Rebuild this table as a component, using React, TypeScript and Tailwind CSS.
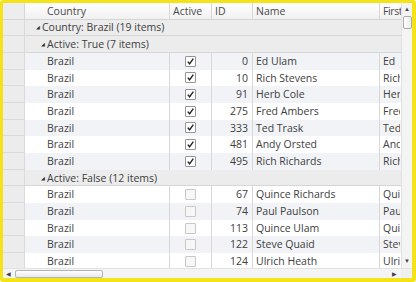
type Row =
  | { kind: "group"; level: number; label: string }
  | { kind: "data"; active: boolean; id: number; name: string };

const rows: Row[] = [
  { kind: "group", level: 0, label: "Country: Brazil (19 items)" },
  { kind: "group", level: 1, label: "Active: True (7 items)" },
  { kind: "data", active: true, id: 0, name: "Ed Ulam" },
  { kind: "data", active: true, id: 10, name: "Rich Stevens" },
  { kind: "data", active: true, id: 91, name: "Herb Cole" },
  { kind: "data", active: true, id: 275, name: "Fred Ambers" },
  { kind: "data", active: true, id: 333, name: "Ted Trask" },
  { kind: "data", active: true, id: 481, name: "Andy Orsted" },
  { kind: "data", active: true, id: 495, name: "Rich Richards" },
  { kind: "group", level: 1, label: "Active: False (12 items)" },
  { kind: "data", active: false, id: 67, name: "Quince Richards" },
  { kind: "data", active: false, id: 74, name: "Paul Paulson" },
  { kind: "data", active: false, id: 113, name: "Quince Ulam" },
  { kind: "data", active: false, id: 122, name: "Steve Quaid" },
  { kind: "data", active: false, id: 124, name: "Ulrich Heath" },
];

function CheckBox({ checked }: { checked: boolean }) {
  return (
    <span
      className={`flex h-[11px] w-[11px] items-center justify-center rounded-[1px] border ${
        checked ? "border-[#959595] bg-white" : "border-[#c8c8c8] bg-[#f7f7f7]"
      }`}
    >
      {checked && (
        <svg width="9" height="9" viewBox="0 0 9 9">
          <path d="M1.8 4.6 L3.6 6.8 L7.3 1.6" fill="none" stroke="#222" strokeWidth="1.4" />
        </svg>
      )}
    </span>
  );
}

export default function App() {
  let dataIndex = 0;
  return (
    <div
      className="flex h-[282px] w-[416px] flex-col overflow-hidden rounded-[3px] border-b-4 border-l-[3px] border-r-4 border-t-[3px] border-[#f5e31a] bg-white text-[10.5px] text-[#404040]"
      style={{ fontFamily: '"Open Sans", "Noto Sans", sans-serif' }}
    >
      <div className="flex min-h-0 flex-1">
        <div className="min-w-0 flex-1 overflow-hidden">
          {/* header */}
          <div className="flex h-[16.5px] border-b border-[#d5d5d5] bg-gradient-to-b from-white to-[#f1f1f1] leading-[16px] text-[#4a4a4a]">
            <div className="w-[22px] shrink-0 border-r border-[#d8d8d8] bg-[#ededed]" />
            <div className="w-[145px] shrink-0 border-r border-[#d8d8d8] pl-[22px]">Country</div>
            <div className="w-[42px] shrink-0 border-r border-[#d8d8d8] pl-[3px]">Active</div>
            <div className="w-[41px] shrink-0 border-r border-[#d8d8d8] pl-[3px]">ID</div>
            <div className="w-[127px] shrink-0 border-r border-[#d8d8d8] pl-[3px]">Name</div>
            <div className="w-[40px] shrink-0 overflow-hidden whitespace-nowrap pl-[3px] tracking-[-0.4px]">First</div>
          </div>
          {rows.map((r, i) => {
            if (r.kind === "group") {
              return (
                <div key={i} className="flex h-[16.7px] leading-[16px]">
                  <div className="w-[22px] shrink-0 border-b border-r border-[#dadada] bg-[#ececec]" />
                  <div
                    className={`flex flex-1 items-center gap-[2px] border-b border-[#d6d6d6] bg-[#ececec] ${
                      r.level === 0 ? "pl-[11px]" : "pl-[16px]"
                    }`}
                  >
                    <span className="text-[5px] text-[#333]">◢</span>
                    <span className="whitespace-nowrap">{r.label}</span>
                  </div>
                </div>
              );
            }
            const odd = dataIndex++ % 2 === 0;
            return (
              <div key={i} className="flex h-[16.7px] leading-[16px]">
                <div className="w-[22px] shrink-0 border-b border-r border-[#dadada] bg-[#ececec]" />
                <div className={`flex flex-1 ${odd ? "bg-[#f1f3f6]" : "bg-white"}`}>
                  <div className="w-[145px] shrink-0 border-r border-[#d8d8d8] pl-[22px]">Brazil</div>
                  <div className="flex w-[42px] shrink-0 items-center justify-center border-r border-[#d8d8d8]">
                    <CheckBox checked={r.active} />
                  </div>
                  <div className="w-[41px] shrink-0 border-r border-[#d8d8d8] pr-[4px] text-right">{r.id}</div>
                  <div className="w-[127px] shrink-0 whitespace-nowrap border-r border-[#d8d8d8] pl-[3px]">{r.name}</div>
                  <div className="w-[20px] shrink-0 overflow-hidden whitespace-nowrap pl-[3px]">{r.name.split(" ")[0]}</div>
                </div>
              </div>
            );
          })}
        </div>
        {/* vertical scrollbar */}
        <div className="flex w-[11px] shrink-0 flex-col items-center border-l border-[#e2e2e2] bg-[#f4f4f4]">
          <span className="mt-[2px] text-[6px] leading-[8px] text-[#444]">▲</span>
          <div className="mt-[3px] h-[13px] w-[9px] rounded-[2px] border border-[#a9a9a9] bg-gradient-to-r from-white to-[#eaeaea]" />
          <div className="flex-1" />
          <span className="mb-[3px] text-[6px] leading-[8px] text-[#444]">▼</span>
        </div>
      </div>
      {/* horizontal scrollbar */}
      <div className="flex h-[10px] shrink-0 border-t border-[#e2e2e2] bg-[#f4f4f4]">
        <div className="flex flex-1 items-center">
          <span className="ml-[3px] text-[6px] leading-[8px] text-[#444]">◀</span>
          <div className="ml-[4px] h-[8px] w-[88px] rounded-[2px] border border-[#b3b3b3] bg-gradient-to-b from-white to-[#e9e9e9]" />
          <div className="flex-1" />
          <span className="mr-[4px] text-[6px] leading-[8px] text-[#444]">▶</span>
        </div>
        <div className="w-[11px] shrink-0 bg-[#f0f0f0]" />
      </div>
    </div>
  );
}
